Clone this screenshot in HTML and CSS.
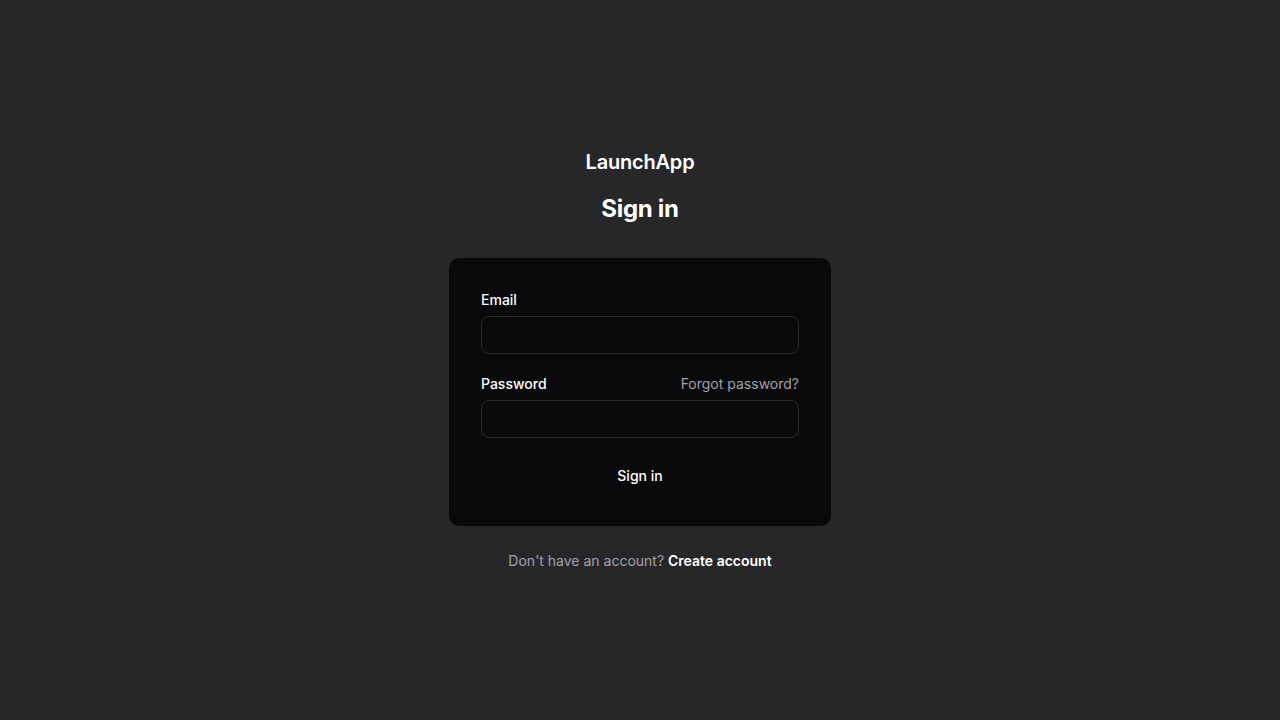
FILE: index.html
```html
<!DOCTYPE html>
<html lang="en">
<head>
<meta charset="utf-8">
<title>Sign in - LaunchApp</title>
<link rel="stylesheet" href="styles.css">
</head>
<body>
<main class="page">
  <div class="auth">
    <header class="auth-header">
      <div class="brand">LaunchApp</div>
      <h1 class="title">Sign in</h1>
    </header>
    <form class="card">
      <div class="field">
        <label class="label" for="email">Email</label>
        <input class="input" id="email" type="email">
      </div>
      <div class="field">
        <div class="label-row">
          <label class="label" for="password">Password</label>
          <a class="forgot" href="#">Forgot password?</a>
        </div>
        <input class="input" id="password" type="password">
      </div>
      <button class="submit" type="button">Sign in</button>
    </form>
    <p class="footer">Don't have an account? <a class="create" href="#">Create account</a></p>
  </div>
</main>
</body>
</html>
```
FILE: styles.css
```css
* { box-sizing: border-box; }
html, body { margin: 0; height: 100%; }
body {
  background: #27272a;
  color: #fafafa;
  font-family: Inter, "Noto Sans", sans-serif;
}
.page {
  min-height: 100vh;
  padding-bottom: 2px;
  display: flex;
  align-items: center;
  justify-content: center;
}
.auth {
  width: 382px;
  display: flex;
  flex-direction: column;
  align-items: stretch;
}
.auth-header {
  display: flex;
  flex-direction: column;
  align-items: center;
  gap: 17px;
  margin-bottom: 33px;
}
.brand {
  font-size: 20px;
  line-height: 28px;
  font-weight: 600;
  letter-spacing: -0.2px;
  color: #ffffff;
}
.title {
  margin: 0;
  font-size: 24px;
  line-height: 32px;
  font-weight: 700;
  letter-spacing: -0.3px;
  color: #ffffff;
}
.card {
  background: #09090b;
  border-radius: 10px;
  padding: 32px;
  display: flex;
  flex-direction: column;
  gap: 20px;
}
.field {
  display: flex;
  flex-direction: column;
  gap: 6px;
}
.label-row {
  display: flex;
  justify-content: space-between;
  align-items: center;
}
.label {
  font-size: 14px;
  line-height: 20px;
  font-weight: 500;
  color: #ffffff;
}
.forgot {
  font-size: 14px;
  line-height: 20px;
  color: #a1a1aa;
  text-decoration: none;
}
.input {
  height: 38px;
  width: 100%;
  background: #09090b;
  border: 1px solid #2a2a2e;
  border-radius: 8px;
  color: #fafafa;
  font: inherit;
  padding: 0 12px;
  outline: none;
}
.submit {
  height: 36px;
  background: transparent;
  border: none;
  color: #ffffff;
  font-family: inherit;
  font-size: 14px;
  font-weight: 500;
  cursor: pointer;
}
.footer {
  margin: 25px 0 0;
  text-align: center;
  font-size: 14px;
  line-height: 20px;
  color: #a1a1aa;
}
.create {
  color: #ffffff;
  font-weight: 600;
  text-decoration: none;
}
```
